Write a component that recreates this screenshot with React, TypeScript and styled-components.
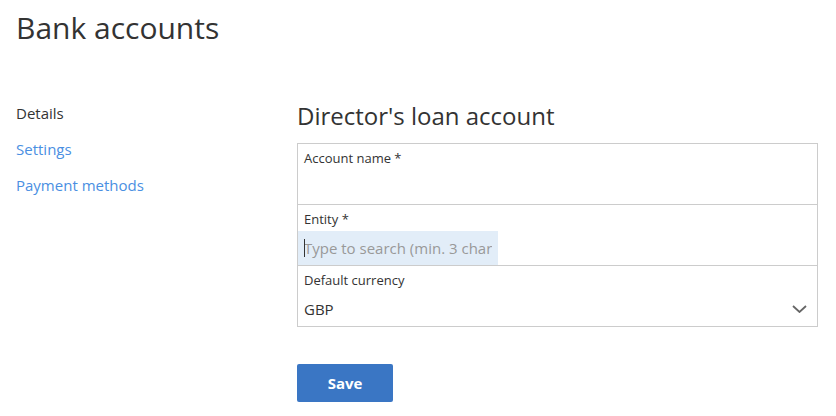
import React from 'react';
import styled, { createGlobalStyle } from 'styled-components';

const GlobalStyle = createGlobalStyle`
  html, body {
    margin: 0;
    padding: 0;
    background: #fff;
  }
  body {
    font-family: 'Open Sans', 'Liberation Sans', Arial, sans-serif;
    color: #333;
  }
  * {
    box-sizing: border-box;
  }
`;

const Page = styled.div`
  padding: 8px 18px 0 16px;
`;

const Title = styled.h1`
  font-size: 30px;
  line-height: 40px;
  font-weight: 400;
  color: #333;
  margin: 0;
`;

const Columns = styled.div`
  display: grid;
  grid-template-columns: 281px 1fr;
  margin-top: 47px;
`;

const SideNav = styled.nav`
  display: flex;
  flex-direction: column;
`;

const NavItem = styled.a<{ $active?: boolean }>`
  font-size: 15px;
  line-height: 36px;
  height: 36px;
  color: ${({ $active }) => ($active ? '#333' : '#4a8fe2')};
  text-decoration: none;
  cursor: pointer;
`;

const Main = styled.section`
  display: flex;
  flex-direction: column;
`;

const SecTitle = styled.h2`
  font-size: 24px;
  line-height: 32px;
  font-weight: 400;
  color: #333;
  margin: 5px 0 11px;
`;

const FormBox = styled.div`
  border: 1px solid #ccc;
  display: flex;
  flex-direction: column;
`;

const Field = styled.div`
  display: flex;
  flex-direction: column;
  padding-top: 8px;
  & + & {
    border-top: 1px solid #ccc;
  }
`;

const Label = styled.label`
  font-size: 13px;
  line-height: 13px;
  padding: 0 0 5px 6px;
  color: #333;
`;

const InputWrap = styled.div<{ $highlight?: boolean }>`
  position: relative;
  height: 34px;
  width: ${({ $highlight }) => ($highlight ? '200px' : '100%')};
  background: ${({ $highlight }) => ($highlight ? '#e2edf8' : 'transparent')};
`;

const TextInput = styled.input`
  width: 100%;
  height: 34px;
  border: 0;
  outline: none;
  background: transparent;
  padding: 0 6px;
  font-family: inherit;
  font-size: 15px;
  color: #333;
  &::placeholder {
    color: #999;
  }
`;

const Caret = styled.span`
  position: absolute;
  left: 6px;
  top: 8px;
  width: 1px;
  height: 18px;
  background: #333;
`;

const SelectBox = styled.div`
  height: 34px;
  display: flex;
  align-items: center;
  justify-content: space-between;
  padding: 0 10px 0 6px;
  font-size: 15px;
  color: #333;
  cursor: pointer;
`;

const Chevron = () => (
  <svg width="15" height="8" viewBox="0 0 15 8" fill="none">
    <path d="M1 1l6.5 6L14 1" stroke="#666" strokeWidth="1.8" />
  </svg>
);

const SaveBtn = styled.button`
  margin-top: 37px;
  width: 96px;
  height: 38px;
  border: 0;
  border-radius: 2px;
  background: #3a76c4;
  color: #fff;
  font-family: inherit;
  font-size: 15px;
  font-weight: 700;
  cursor: pointer;
`;

export default function App() {
  return (
    <>
      <GlobalStyle />
      <Page>
        <Title>Bank accounts</Title>
        <Columns>
          <SideNav>
            <NavItem $active>Details</NavItem>
            <NavItem>Settings</NavItem>
            <NavItem>Payment methods</NavItem>
          </SideNav>
          <Main>
            <SecTitle>Director's loan account</SecTitle>
            <FormBox>
              <Field>
                <Label>Account name *</Label>
                <InputWrap>
                  <TextInput type="text" />
                </InputWrap>
              </Field>
              <Field>
                <Label>Entity *</Label>
                <InputWrap $highlight>
                  <TextInput type="text" placeholder="Type to search (min. 3 characters)" />
                  <Caret />
                </InputWrap>
              </Field>
              <Field>
                <Label>Default currency</Label>
                <SelectBox>
                  <span>GBP</span>
                  <Chevron />
                </SelectBox>
              </Field>
            </FormBox>
            <div>
              <SaveBtn>Save</SaveBtn>
            </div>
          </Main>
        </Columns>
      </Page>
    </>
  );
}
